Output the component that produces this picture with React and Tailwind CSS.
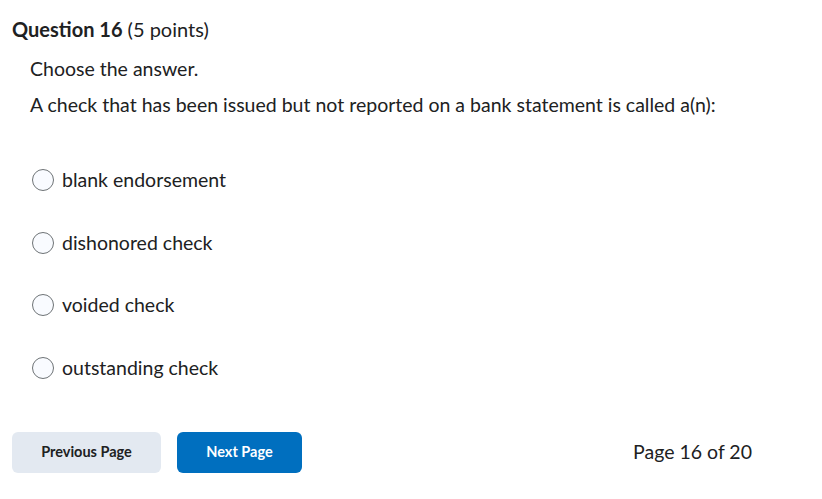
export default function App() {
  const options = ["blank endorsement", "dishonored check", "voided check", "outstanding check"];
  return (
    <div className="w-[822px] h-[499px] bg-white text-[#202122]" style={{ fontFamily: "Lato, 'Noto Sans', sans-serif" }}>
      <div className="pt-[17px] pl-[12px]">
        <h2 className="text-[20px] leading-[24px]">
          <span className="font-bold">Question 16</span> (5 points)
        </h2>
        <div className="pl-[18px] pt-[16px] text-[19.5px] leading-[24px]">
          <p>Choose the answer.</p>
          <p className="mt-[12px]">A check that has been issued but not reported on a bank statement is called a(n):</p>
        </div>
        <div className="pl-[20px] pt-[51px] flex flex-col gap-[38.5px]">
          {options.map((o) => (
            <label key={o} className="flex items-center gap-[8px] text-[19.5px] leading-[24px]">
              <span className="w-[22px] h-[22px] rounded-full border border-[#6e7376] bg-[#f9fbff] shrink-0" />
              <span>{o}</span>
            </label>
          ))}
        </div>
        <div className="mt-[52px] flex items-center pr-[70px]">
          <button className="w-[149px] h-[41px] rounded-[6px] bg-[#e3e9f1] text-[14.5px] font-bold text-[#202122]">Previous Page</button>
          <button className="ml-[16px] w-[125px] h-[41px] rounded-[6px] bg-[#006fbf] text-[14.5px] font-bold text-white">Next Page</button>
          <span className="ml-auto text-[19.5px]">Page 16 of 20</span>
        </div>
      </div>
    </div>
  );
}
